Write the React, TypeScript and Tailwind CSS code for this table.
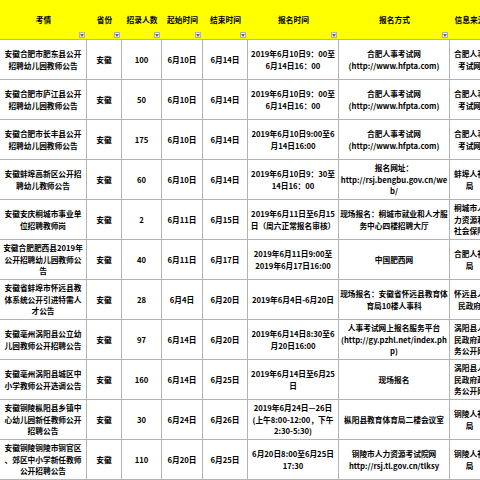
const headers = ["考情", "省份", "招录人数", "起始时间", "结束时间", "报名时间", "报名方式", "信息来源"];

const hfWeb = "合肥人事考试网\n(http://www.hfpta.com)";
const hfSrc = "合肥人事\n考试网";

// each cell keeps the line breaks of the sheet
const rows: string[][] = [
  ["安徽合肥市肥东县公开\n招聘幼儿园教师公告", "安徽", "100", "6月10日", "6月14日", "2019年6月10日9：00至\n6月14日16：00", hfWeb, hfSrc],
  ["安徽合肥市庐江县公开\n招聘幼儿园教师公告", "安徽", "50", "6月10日", "6月14日", "2019年6月10日9：00至\n6月14日16：00", hfWeb, hfSrc],
  ["安徽合肥市长丰县公开\n招聘幼儿园教师公告", "安徽", "175", "6月10日", "6月14日", "2019年6月10日9:00至6\n月14日16:00", hfWeb, hfSrc],
  ["安徽蚌埠高新区公开招\n聘幼儿教师公告", "安徽", "60", "6月10日", "6月14日", "2019年6月10日9：30至\n14日16：00", "报名网址：\nhttp://rsj.bengbu.gov.cn/we\nb/", "蚌埠人社\n局"],
  ["安徽安庆桐城市事业单\n位招聘教师岗", "安徽", "2", "6月11日", "6月15日", "2019年6月11日至6月15\n日（周六正常报名审核）", "现场报名：桐城市就业和人才服\n务中心四楼招聘大厅", "桐城市人\n力资源和\n社会保障\n局"],
  ["安徽合肥肥西县2019年\n公开招聘幼儿园教师公\n告", "安徽", "40", "6月11日", "6月17日", "2019年6月11日9:00至\n2019年6月17日16:00", "中国肥西网", "合肥人社\n局"],
  ["安徽省蚌埠市怀远县教\n体系统公开引进特需人\n才公告", "安徽", "28", "6月4日", "6月20日", "2019年6月4日-6月20日", "现场报名：安徽省怀远县教育体\n育局10楼人事科", "怀远县人\n民政府"],
  ["安徽亳州涡阳县公立幼\n儿园教师公开招聘公告", "安徽", "97", "6月14日", "6月20日", "2019年6月14日8:30至6\n月20日16:00", "人事考试网上报名服务平台\n(http://gy.pzhl.net/index.ph\np)", "涡阳县人\n民政府政\n务公开网"],
  ["安徽亳州涡阳县城区中\n小学教师公开选调公告", "安徽", "160", "6月14日", "6月25日", "2019年6月14日至6月25\n日", "现场报名", "涡阳县人\n民政府政\n务公开网"],
  ["安徽铜陵枞阳县乡镇中\n心幼儿园新任教师公开\n招聘公告", "安徽", "30", "6月24日", "6月26日", "2019年6月24日—26日\n(上午8:00-12:00，下午\n2:30-5:30)", "枞阳县教育体育局二楼会议室", "铜陵人社\n局"],
  ["安徽铜陵铜陵市铜官区\n、郊区中小学新任教师\n公开招聘公告", "安徽", "110", "6月20日", "6月25日", "6月20日8:00至6月25日\n17:30", "铜陵市人力资源考试院网\nhttp://rsj.tl.gov.cn/tlksy", "铜陵人社\n局"],
];

function FilterButton() {
  return (
    <div className="absolute bottom-[1px] right-[2px] w-[6px] h-[6px] bg-[#efefef] border border-[#b0b0b0] flex items-center justify-center">
      <svg width="4" height="3" viewBox="0 0 4 3">
        <path d="M0 0 L4 0 L2 3 Z" fill="#666" />
      </svg>
    </div>
  );
}

export default function App() {
  return (
    <div className="w-[480px] h-[480px] overflow-hidden bg-white font-['Noto_Sans_CJK_SC','Microsoft_YaHei',sans-serif] text-black">
      <div className="grid grid-cols-[87px_35px_40px_41px_45px_91px_111px_40px] w-[490px]">
        {headers.map((h, i) => (
          <div
            key={h}
            className="relative h-[40px] bg-[#ffff00] border-b border-[#b4b4b4] flex items-center justify-center text-[7.7px] font-bold whitespace-nowrap"
          >
            <span>{h}</span>
            {i < 7 && <FilterButton />}
          </div>
        ))}
        {rows.map((row, r) =>
          row.map((cell, c) => {
            const tall = cell.split("\n").length > 3;
            return (
              <div
                key={`${r}-${c}`}
                className={`h-[40px] overflow-hidden border-b border-r border-[#b4b4b4] flex justify-center ${
                  tall ? "items-start pt-[2px]" : "items-center"
                }`}
              >
                <div className="whitespace-pre text-center text-[7.7px] leading-[11.5px] font-bold">{cell}</div>
              </div>
            );
          })
        )}
      </div>
    </div>
  );
}
